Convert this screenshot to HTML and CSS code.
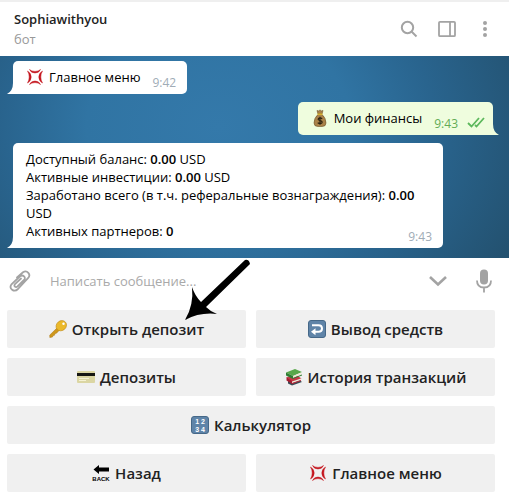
FILE: index.html
```html
<!DOCTYPE html>
<html lang="ru">
<head>
    <meta charset="UTF-8">
    <meta name="viewport" content="width=device-width, initial-scale=1.0">
    <title>Sophiawithyou</title>
    <link rel="stylesheet" href="styles.css">
</head>
<body>
    <!-- Shared symbol, used in the chat and on the keyboard -->
    <svg class="defs" width="0" height="0" aria-hidden="true">
        <symbol id="anger" viewBox="0 0 18 18">
            <g fill="#c4161f" stroke="#c4161f" stroke-width=".5" stroke-linejoin="round">
                <path d="M3.500 1.500Q5.500 3.400 9 3.400Q12.500 3.400 14.500 1.500Q13 5 9 5Q5 5 3.500 1.500Z"/>
                <path d="M3.500 16.500Q5.500 14.600 9 14.600Q12.500 14.600 14.500 16.500Q13 13 9 13Q5 13 3.500 16.500Z"/>
                <path d="M1.500 3Q3.200 5.500 3.200 9Q3.200 12.500 1.500 15Q5.200 13 5.200 9Q5.200 5 1.500 3Z"/>
                <path d="M16.500 3Q14.800 5.500 14.800 9Q14.800 12.500 16.500 15Q12.800 13 12.800 9Q12.800 5 16.500 3Z"/>
            </g>
        </symbol>
    </svg>

    <header class="header">
        <div class="peer">
            <h1 class="peer-name">Sophiawithyou</h1>
            <p class="peer-status">бот</p>
        </div>
        <div class="header-actions">
            <button class="icon-button" type="button" aria-label="Поиск">
                <svg width="18" height="18" viewBox="0 0 18 18" fill="none" stroke="#a3a3a3" stroke-width="2">
                    <circle cx="7.500" cy="7.500" r="5.700"/>
                    <path d="M11.500 11.500L16.500 16.500"/>
                </svg>
            </button>
            <button class="icon-button" type="button" aria-label="Панель">
                <svg width="18" height="18" viewBox="0 0 18 18" fill="none" stroke="#a3a3a3" stroke-width="1.800">
                    <rect x="1" y="1.800" width="16" height="14.400" rx="1"/>
                    <path d="M12 2V16"/>
                </svg>
            </button>
            <button class="icon-button" type="button" aria-label="Меню">
                <svg width="18" height="18" viewBox="0 0 18 18" fill="#a3a3a3">
                    <circle cx="9" cy="3" r="2"/>
                    <circle cx="9" cy="9" r="2"/>
                    <circle cx="9" cy="15" r="2"/>
                </svg>
            </button>
        </div>
    </header>

    <main class="chat">
        <div class="message incoming">
            <svg class="emoji" width="18" height="18"><use href="#anger"/></svg>
            <p class="text">Главное меню</p>
            <time class="time">9:42</time>
            <svg class="tail" width="7" height="11" viewBox="0 0 7 11"><path d="M7 0V11H0Q6 8 6 0Z"/></svg>
        </div>

        <div class="message outgoing">
            <svg class="emoji" width="18" height="18" viewBox="0 0 18 18">
                <path d="M6 1.500Q7.500 2.500 9 1Q10.500 2.500 12 1.500L11 5H7Z" fill="#a9824a" stroke="#6d5027" stroke-width=".6"/>
                <path d="M7 5.500H11Q15 9 15 14Q15 17.500 11 17.500H7Q3 17.500 3 14Q3 9 7 5.500Z" fill="#a9824a" stroke="#6d5027" stroke-width=".6"/>
                <path d="M6.500 5.200H11.500" stroke="#d9b430" stroke-width="1.500"/>
                <path d="M11.200 9.800Q9 8.300 7.500 9.500Q6.500 11 9 11.600Q12 12.300 10.800 14Q9 15.300 6.700 13.800M9 7.800V15.800" fill="none" stroke="#2c2312" stroke-width="1.200"/>
            </svg>
            <p class="text">Мои финансы</p>
            <time class="time">9:43</time>
            <svg class="checks" width="18" height="11" viewBox="0 0 18 11" fill="none" stroke="#5cb85c" stroke-width="1.800">
                <path d="M1 6L4.500 9.500L12 1"/>
                <path d="M8 8L9.500 9.500L17 1"/>
            </svg>
            <svg class="tail" width="7" height="11" viewBox="0 0 7 11"><path d="M0 0V11H7Q1 8 1 0Z"/></svg>
        </div>

        <div class="message incoming balance">
            <p class="text">
                Доступный баланс: <b>0.00</b> USD<br>
                Активные инвестиции: <b>0.00</b> USD<br>
                Заработано всего (в т.ч. реферальные вознаграждения): <b>0.00</b> USD<br>
                Активных партнеров: <b>0</b>
            </p>
            <time class="time">9:43</time>
            <svg class="tail" width="7" height="11" viewBox="0 0 7 11"><path d="M7 0V11H0Q6 8 6 0Z"/></svg>
        </div>
    </main>

    <form class="composer">
        <button class="icon-button" type="button" aria-label="Прикрепить файл">
            <svg width="22" height="24" viewBox="0 0 22 24" fill="none" stroke="#a3a3a3" stroke-width="1.800" stroke-linecap="round">
                <path d="M8 8.500L14 3.300C18 0.500 22.500 5.500 19 9.200L9 20C5 24 -0.500 19.500 2.500 15.300L11 7.300C14 5 17.500 8.500 15 11L8.500 17.500C6.500 19 4.500 17 6 15L12 9.500"/>
            </svg>
        </button>
        <input class="composer-input" type="text" aria-label="Сообщение" placeholder="Написать сообщение...">
        <button class="icon-button" type="button" aria-label="Скрыть клавиатуру">
            <svg width="18" height="12" viewBox="0 0 18 12" fill="none" stroke="#a3a3a3" stroke-width="2.600">
                <path d="M1 2L9 9.500L17 2"/>
            </svg>
        </button>
        <button class="icon-button mic" type="button" aria-label="Голосовое сообщение">
            <svg width="16" height="24" viewBox="0 0 16 24">
                <rect x="4" y="0.500" width="8" height="15" rx="4" fill="#a3a3a3"/>
                <path d="M1 11.500Q1 18.500 8 18.500Q15 18.500 15 11.500M8 18.500V23.500" fill="none" stroke="#a3a3a3" stroke-width="1.800"/>
            </svg>
        </button>
    </form>

    <div class="keyboard">
        <button class="key" type="button">
            <svg width="18" height="18" viewBox="0 0 18 18">
                <path d="M9.500 6.500L0.800 15V17.500L3.500 17L4 15.500L5.500 15.200L6 13.500L7.500 13.200L11.500 9Z" fill="#cf981c" stroke="#a8730f" stroke-width=".5"/>
                <ellipse cx="12.300" cy="5.700" rx="5.500" ry="4.800" transform="rotate(-40 12.300 5.700)" fill="#ebb92a" stroke="#c08a18" stroke-width=".6"/>
                <circle cx="14.500" cy="3.800" r="1.200" fill="#fff"/>
            </svg>
            Открыть депозит
        </button>
        <button class="key" type="button">
            <svg width="18" height="18" viewBox="0 0 18 18">
                <rect x=".5" y=".5" width="17" height="17" rx="2.500" fill="#5f84a8" stroke="#456888"/>
                <path d="M4 5.200H10.500Q14 5.200 14 8.500Q14 11.800 10.500 11.800H6" fill="none" stroke="#fff" stroke-width="2"/>
                <path d="M3 11.800L7.500 8.300V15.300Z" fill="#fff"/>
            </svg>
            Вывод средств
        </button>
        <button class="key" type="button">
            <svg width="18" height="18" viewBox="0 0 18 18">
                <rect y="3" width="18" height="12" rx="1" fill="#dbd6a3"/>
                <rect y="5" width="18" height="3" fill="#171713"/>
                <path d="M2 10.500H12M2 12.500H9" stroke="#f5f2d4" stroke-width="1.200"/>
            </svg>
            Депозиты
        </button>
        <button class="key" type="button">
            <svg width="18" height="18" viewBox="0 0 18 18">
                <path d="M3 13L13 11L17 14L7 17.500L3 15.500Z" fill="#354b55"/>
                <path d="M1.500 9L12 7.500L16.500 10.500L7 14Z" fill="#c83645"/>
                <path d="M1.500 9L7 13V16L1.500 12.500Z" fill="#a51d30"/>
                <path d="M7 13.500L16 10.500V12L7 15.300Z" fill="#f1e9d8"/>
                <path d="M7 15L16 12V13L7 16.300Z" fill="#b3283a"/>
                <path d="M1 4.500L10 1L17 4L8 8Z" fill="#58a84a"/>
                <path d="M1 4.500L8 8V11L1 7.500Z" fill="#2f7d34"/>
                <path d="M8 8L16.500 4.500V6.500L8 10Z" fill="#eee9d6"/>
                <path d="M8 10L17 6.500V7.500L8 11Z" fill="#2f7d34"/>
            </svg>
            История транзакций
        </button>
        <button class="key wide" type="button">
            <svg class="numbers" width="18" height="18" viewBox="0 0 18 18">
                <rect x=".5" y=".5" width="17" height="17" rx="2.500" fill="#5f84a8" stroke="#456888"/>
                <text x="9" y="8">1 2</text>
                <text x="9" y="16">3 4</text>
            </svg>
            Калькулятор
        </button>
        <button class="key" type="button">
            <svg class="back" width="18" height="18" viewBox="0 0 18 18">
                <path d="M1.500 5.500L7 1V3.500H17V7.500H7V10Z"/>
                <text x="9" y="17">BACK</text>
            </svg>
            Назад
        </button>
        <button class="key" type="button">
            <svg width="18" height="18"><use href="#anger"/></svg>
            Главное меню
        </button>

        <!-- Pointer to the deposit button -->
        <svg class="pointer" width="66" height="62" viewBox="0 0 66 62" aria-hidden="true">
            <path d="M60 1Q64 0 65 5L21 48Q26 53 32 55Q15 53 0 61Q9 46 7 28Q10 37 16 43Z"/>
        </svg>
    </div>
</body>
</html>
```
FILE: styles.css
```css
body {
    font-family: "Open Sans", "Noto Sans", sans-serif;
    font-size: 13px;
    color: #000;
    background-color: #fff;
    margin: 0;
}

h1, p {
    margin: 0;
}

button, input {
    font-family: inherit;
    border: none;
    padding: 0;
}

svg {
    display: block;
    flex-shrink: 0;
}

.defs {
    position: absolute;
}

/* Header */
.header {
    display: flex;
    justify-content: space-between;
    align-items: center;
    box-sizing: border-box;
    height: 56px;
    padding: 0 15px 0 14px;
    border-top: 2px solid #efefef;
}

.peer-name {
    font-size: 13px;
    line-height: 20px;
    font-weight: 600;
    color: #222;
}

.peer-status {
    line-height: 20px;
    color: #999;
}

.header-actions {
    display: flex;
    gap: 20px;
}

.icon-button {
    background: none;
    cursor: pointer;
}

/* Messages */
.chat {
    display: flex;
    flex-direction: column;
    align-items: flex-start;
    gap: 8px;
    padding: 5px 16px 10px 13px;
    background: radial-gradient(65% 130% at 43% 35%, #3479aa 0%, #3074a3 40%, #29648e 65%, #23516f 100%);
}

.message {
    position: relative;
    display: flex;
    box-sizing: border-box;
    padding: 7px 11px 8px 13px;
    line-height: 18px;
    border-radius: 5px;
}

.incoming {
    background-color: #fff;
    fill: #fff;
    border-bottom-left-radius: 0;
}

.outgoing {
    align-self: flex-end;
    padding-right: 8px;
    background-color: #effdde;
    fill: #effdde;
    border-bottom-right-radius: 0;
}

.emoji {
    margin-right: 5px;
}

.time {
    flex-shrink: 0;
    align-self: flex-end;
    margin: 0 0 -6px 12px;
    font-size: 12px;
    color: #a0acb6;
}

.outgoing .time {
    color: #62ac55;
}

.checks {
    align-self: flex-end;
    margin: 0 0 -1px 9px;
}

.tail {
    position: absolute;
    bottom: 0;
}

.incoming .tail {
    right: calc(100% - 1px);
}

.outgoing .tail {
    left: calc(100% - 1px);
}

.balance {
    max-width: 430px;
}

/* The time shares the last line with the text */
.balance .time {
    margin-left: -25px;
}

.balance b {
    font-weight: 600;
}

/* Message field */
.composer {
    display: flex;
    align-items: center;
    height: 46px;
    padding: 0 17px 0 9px;
}

.composer-input {
    flex: 1;
    min-width: 0;
    margin: 0 19px;
    font-size: 13px;
    background: none;
    outline: none;
}

.composer-input::placeholder {
    color: #a9a9a9;
}

.mic {
    margin-left: 29px;
}

/* Bot keyboard */
.keyboard {
    position: relative;
    display: grid;
    grid-template-columns: 1fr 1fr;
    gap: 10px;
    padding: 6px 14px 1px 7px;
}

.key {
    display: flex;
    justify-content: center;
    align-items: center;
    gap: 5px;
    height: 38px;
    font-size: 15px;
    font-weight: 600;
    color: #222;
    background-color: #f0f0f0;
    border-radius: 2px;
    cursor: pointer;
}

.wide {
    grid-column: 1 / -1;
}

.numbers text {
    font-family: "Liberation Sans", sans-serif;
    font-size: 7px;
    font-weight: bold;
    fill: #fff;
    text-anchor: middle;
}

.back text {
    font-family: "Liberation Sans Narrow", "Liberation Sans", sans-serif;
    font-size: 6px;
    font-weight: bold;
    text-anchor: middle;
}

.pointer {
    position: absolute;
    left: 185px;
    top: -45px;
    pointer-events: none;
}
```
